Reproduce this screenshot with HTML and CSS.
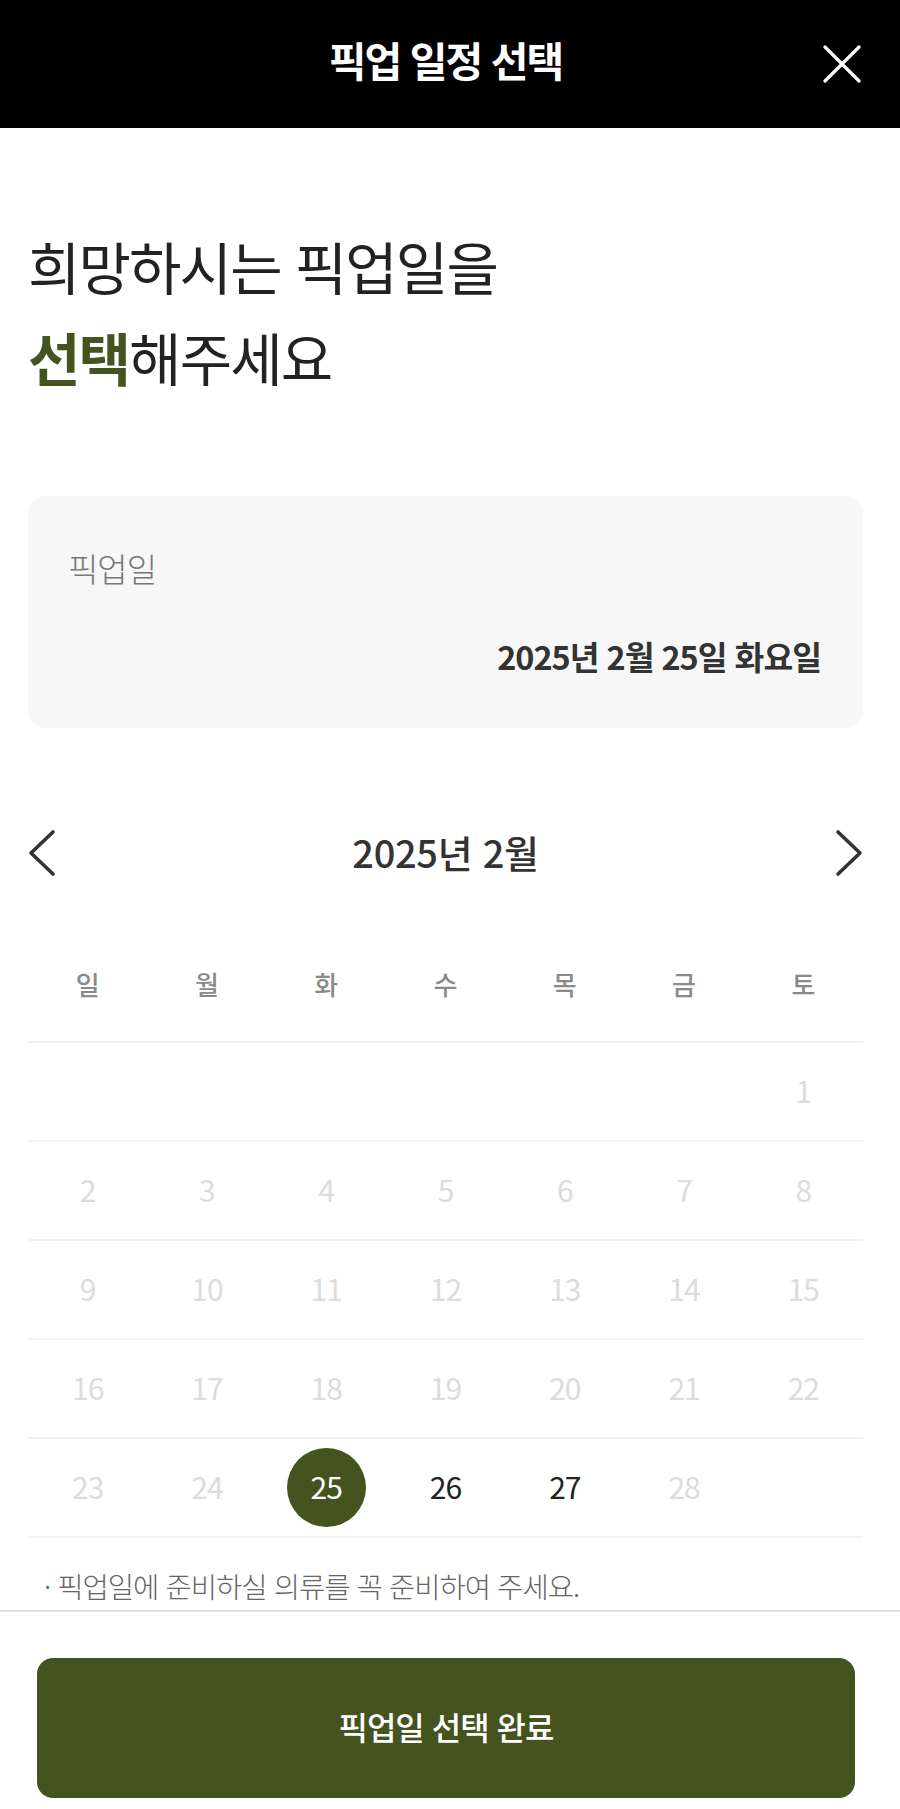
FILE: index.html
```html
<!DOCTYPE html>
<html lang="ko">
<head>
<meta charset="utf-8">
<title>픽업 일정 선택</title>
<link rel="stylesheet" href="styles.css">
</head>
<body>
<header class="header">
  <h1 class="header-title">픽업 일정 선택</h1>
  <button class="close" type="button" aria-label="닫기">
    <svg viewBox="0 0 38 38" width="38" height="38"><path d="M2 2 L36 36 M36 2 L2 36" stroke="#fff" stroke-width="3.2" stroke-linecap="round" fill="none"/></svg>
  </button>
</header>
<main class="content">
  <h2 class="heading">희망하시는 픽업일을<br><strong class="accent">선택</strong>해주세요</h2>
  <section class="card">
    <div class="card-label">픽업일</div>
    <div class="card-date">2025년 2월 25일 화요일</div>
  </section>
  <section class="calendar">
    <div class="cal-nav">
      <button class="nav-btn" type="button" aria-label="이전 달">
        <svg viewBox="0 0 28 48" width="28" height="48"><path d="M25 3 L3 24 L25 45" stroke="#333" stroke-width="3.6" stroke-linecap="round" stroke-linejoin="round" fill="none"/></svg>
      </button>
      <div class="month">2025년 2월</div>
      <button class="nav-btn" type="button" aria-label="다음 달">
        <svg viewBox="0 0 28 48" width="28" height="48"><path d="M3 3 L25 24 L3 45" stroke="#333" stroke-width="3.6" stroke-linecap="round" stroke-linejoin="round" fill="none"/></svg>
      </button>
    </div>
    <div class="weekdays">
      <span class="weekday">일</span><span class="weekday">월</span><span class="weekday">화</span><span class="weekday">수</span><span class="weekday">목</span><span class="weekday">금</span><span class="weekday">토</span>
    </div>
    <div class="weeks">
      <div class="week">
        <span class="day"></span><span class="day"></span><span class="day"></span><span class="day"></span><span class="day"></span><span class="day"></span><span class="day">1</span>
      </div>
      <div class="week">
        <span class="day">2</span><span class="day">3</span><span class="day">4</span><span class="day">5</span><span class="day">6</span><span class="day">7</span><span class="day">8</span>
      </div>
      <div class="week">
        <span class="day">9</span><span class="day">10</span><span class="day">11</span><span class="day">12</span><span class="day">13</span><span class="day">14</span><span class="day">15</span>
      </div>
      <div class="week">
        <span class="day">16</span><span class="day">17</span><span class="day">18</span><span class="day">19</span><span class="day">20</span><span class="day">21</span><span class="day">22</span>
      </div>
      <div class="week">
        <span class="day">23</span><span class="day">24</span><span class="day selected">25</span><span class="day available">26</span><span class="day available">27</span><span class="day">28</span><span class="day"></span>
      </div>
    </div>
    <p class="note">· 픽업일에 준비하실 의류를 꼭 준비하여 주세요.</p>
  </section>
</main>
<footer class="bottom-bar">
  <button class="btn" type="button">픽업일 선택 완료</button>
</footer>
</body>
</html>
```
FILE: styles.css
```css
* { box-sizing: border-box; }
html, body { margin: 0; padding: 0; }
body {
  width: 900px;
  background: #fff;
  font-family: "Noto Sans CJK KR", "Noto Sans", sans-serif;
  color: #222;
}
button { font-family: inherit; cursor: pointer; }

.header {
  background: #000;
  height: 128px;
  display: grid;
  grid-template-columns: 1fr auto 1fr;
  align-items: center;
  padding-right: 9px;
}
.header-title {
  grid-column: 2;
  margin: 0 0 10px;
  color: #fff;
  font-size: 41px;
  font-weight: 700;
  letter-spacing: -2px;
  line-height: 1;
}
.close {
  grid-column: 3;
  justify-self: end;
  margin-right: 30px;
  width: 38px;
  height: 38px;
  padding: 0;
  border: 0;
  background: none;
  display: flex;
}

.content { padding: 0 37px 0 28px; }

.heading {
  margin: 92px 0 0;
  font-size: 57px;
  line-height: 91px;
  font-weight: 400;
  color: #222;
  letter-spacing: -1.9px;
}
.accent { color: #45531e; font-weight: 700; }

.card {
  margin-top: 94px;
  height: 232px;
  background: #f7f7f7;
  border-radius: 18px;
  padding: 52px 42px 52px 40px;
  display: flex;
  flex-direction: column;
  justify-content: space-between;
}
.card-label {
  font-size: 33px;
  line-height: 40px;
  color: #777;
  font-weight: 300;
  letter-spacing: -1px;
}
.card-date {
  align-self: flex-end;
  font-size: 32.4px;
  line-height: 40px;
  font-weight: 700;
  color: #333;
  letter-spacing: -1px;
}

.cal-nav {
  margin-top: 93px;
  height: 64px;
  display: flex;
  justify-content: space-between;
  align-items: center;
}
.nav-btn {
  width: 28px;
  height: 48px;
  padding: 0;
  border: 0;
  background: none;
  display: flex;
}
.month {
  font-size: 38px;
  font-weight: 500;
  color: #333;
  letter-spacing: -0.3px;
  line-height: 48px;
  padding-bottom: 2px;
}

.weekdays {
  display: grid;
  grid-template-columns: repeat(7, 1fr);
  margin-top: 79px;
  padding-bottom: 37px;
}
.weekday {
  text-align: center;
  font-size: 26px;
  line-height: 40px;
  font-weight: 500;
  color: #8a8a8a;
}

.weeks { border-bottom: 2px solid #f2f2f2; }
.week {
  display: grid;
  grid-template-columns: repeat(7, 1fr);
  height: 99px;
  border-top: 2px solid #f2f2f2;
  align-items: center;
  justify-items: center;
}
.day {
  width: 79px;
  height: 79px;
  padding-bottom: 3px;
  border-radius: 50%;
  display: flex;
  align-items: center;
  justify-content: center;
  font-size: 30px;
  font-weight: 400;
  letter-spacing: -1px;
  color: #dcdcdc;
}
.day.available { color: #222; }
.day.selected { background: #45531e; color: #fff; }

.note {
  margin: 30px 0 0;
  padding-left: 16px;
  font-size: 28.6px;
  line-height: 36px;
  font-weight: 300;
  color: #666;
  letter-spacing: -1px;
}

.bottom-bar {
  margin-top: 6px;
  border-top: 2px solid #e0e0e0;
  padding: 46px 45px 11px 37px;
}
.btn {
  display: block;
  width: 100%;
  height: 140px;
  padding: 0 0 4px;
  border: 0;
  border-radius: 16px;
  background: #45531e;
  color: #fff;
  font-size: 32px;
  font-weight: 500;
  letter-spacing: -1px;
}
```
